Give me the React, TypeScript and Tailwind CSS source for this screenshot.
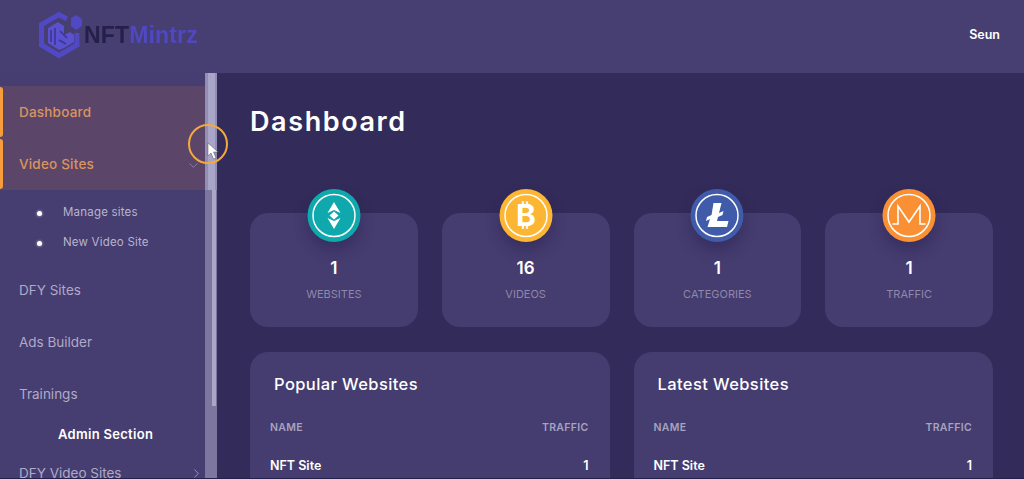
import { ChevronDown, ChevronRight } from 'lucide-react';

const font = "font-['Inter','Noto_Sans',sans-serif]";

function Logo() {
  return (
    <div className="flex items-center">
      <svg width="44" height="48" viewBox="0 0 44 48" className="mr-[2px] blur-[0.6px]">
        <path d="M29 8 L21 3.5 L3.5 13.5 V34 L21 44.5 L39 34 V22" fill="none" stroke="#5148c4" strokeWidth="5" />
        <path d="M33 7 L38 4 L44 8 V15 L38 19 L33 15 Z" fill="#5148c4" />
        <path d="M10 17 L20 11 L26 15 V37 L21 39 L10 32 Z" fill="#5a51d0" />
        <path d="M26 24 L32 21 L36 24 V31 L26 37 Z" fill="#5a51d0" />
        <path d="M13 19 V31 M17 17 V34 M22 20 L29 27 M21 29 L28 33" stroke="#3d3590" strokeWidth="1.6" fill="none" />
      </svg>
      <span className="text-[23px] font-bold leading-none tracking-[0.15px] blur-[0.4px] font-['Liberation_Sans',sans-serif]">
        <span className="text-[#25204a]">NFT</span>
        <span className="text-[#4f48c0]">Mintrz</span>
      </span>
    </div>
  );
}

function ActiveItem({ label, chevron }: { label: string; chevron?: boolean }) {
  return (
    <div className="relative flex h-[52px] items-center justify-between bg-[#5b4669] pl-[19px] pr-[4px]">
      <span className="absolute bottom-[1px] left-0 top-[1px] w-[3px] rounded-r-[3px] bg-[#f79d3c]" />
      <span className="text-[13.5px] font-medium tracking-[0.2px] text-[#d9945f]">{label}</span>
      {chevron && <ChevronDown size={15} strokeWidth={1.2} className="mt-[2px] text-[#948eb0]" />}
    </div>
  );
}

function SubItem({ label }: { label: string }) {
  return (
    <div className="flex h-[30px] items-center pl-[37px]">
      <span className="h-[5px] w-[5px] rounded-full bg-white shadow-[0_0_3px_rgba(255,255,255,0.7)]" />
      <span className="ml-[21px] text-[11.5px] tracking-[0.2px] text-[#b9b4cf]">{label}</span>
    </div>
  );
}

function NavItem({ label }: { label: string }) {
  return (
    <div className="flex h-[52px] items-center pl-[19px] text-[13.5px] text-[#b0aac8]">{label}</div>
  );
}

function Coin({ color, children }: { color: string; children: React.ReactNode }) {
  return (
    <div
      className="absolute left-1/2 top-[-24px] flex h-[53px] w-[53px] -translate-x-1/2 items-center justify-center rounded-full shadow-[0_8px_14px_rgba(40,32,80,0.45)]"
      style={{ backgroundColor: color }}
    >
      <svg width="53" height="53" viewBox="0 0 53 53">
        <circle cx="26.5" cy="26.5" r="21" fill="none" stroke="#fff" strokeWidth="1.5" />
        {children}
      </svg>
    </div>
  );
}

function StatCard({ value, label, color, icon }: { value: string; label: string; color: string; icon: React.ReactNode }) {
  return (
    <div className="relative flex h-[114px] flex-col items-center rounded-[18px] bg-[#453c6f] pt-[43px]">
      <Coin color={color}>{icon}</Coin>
      <div className="text-[17px] font-semibold leading-[24px] text-white">{value}</div>
      <div className="mt-[7px] text-[11px] leading-[14px] text-[#8e88ac]">{label}</div>
    </div>
  );
}

function TableCard({ title }: { title: string }) {
  return (
    <div className="h-[160px] rounded-[18px] bg-[#453c6f] pl-[20px] pr-[21px] pt-[22px]">
      <h2 className="pl-[4px] text-[16.5px] font-medium leading-[20px] tracking-[0.4px] text-white">{title}</h2>
      <div className="mt-[27px] flex justify-between text-[10.5px] font-semibold leading-[14px] tracking-[0.3px] text-[#a8a3c0]">
        <span>NAME</span>
        <span>TRAFFIC</span>
      </div>
      <div className="mt-[23px] flex justify-between text-[12.5px] font-semibold leading-[16px] text-white">
        <span>NFT Site</span>
        <span>1</span>
      </div>
    </div>
  );
}

export default function App() {
  return (
    <div className={`relative flex h-[479px] w-[1024px] flex-col overflow-hidden border-b border-[#25204a] bg-[#332b59] ${font}`}>
      <header className="flex h-[73px] shrink-0 items-center justify-between bg-[#473e71] pb-[3px] pl-[38px] pr-[24px]">
        <Logo />
        <span className="text-[12.5px] font-semibold text-white">Seun</span>
      </header>

      <div className="flex min-h-0 flex-1">
        <aside className="flex w-[217px] shrink-0 overflow-hidden bg-[#463d70]">
          <div className="w-[205px] pt-[13px]">
            <ActiveItem label="Dashboard" />
            <ActiveItem label="Video Sites" chevron />
            <div className="pb-[6px] pt-[8px]">
              <SubItem label="Manage sites" />
              <SubItem label="New Video Site" />
            </div>
            <NavItem label="DFY Sites" />
            <NavItem label="Ads Builder" />
            <NavItem label="Trainings" />
            <div className="mt-[6px] pl-[58px] text-[13px] font-semibold leading-[16px] tracking-[0.3px] text-white">Admin Section</div>
            <div className="mt-[23px] flex items-center justify-between pl-[19px] pr-[1px] text-[13.5px] leading-[16px] text-[#b0aac8]">
              <span>DFY Video Sites</span>
              <ChevronRight size={15} strokeWidth={1.2} />
            </div>
          </div>
          <div className="w-[12px] bg-[#7d769e]">
            <div className="h-[117px] bg-[#938eb3] pl-[3px]">
              <div className="h-full w-[7px] bg-[#a9a5c9]" />
            </div>
            <div className="ml-[7px] h-[216px] w-[4px] bg-[#aaa6c6]" />
          </div>
        </aside>

        <main className="min-w-0 flex-1 pl-[33px] pr-[31px]">
          <h1 className="mt-[32px] text-[27px] font-semibold leading-[34px] tracking-[1.6px] text-white">Dashboard</h1>
          <div className="mt-[74px] grid grid-cols-4 gap-x-[24px]">
            <StatCard
              value="1"
              label="WEBSITES"
              color="#0ea8ad"
              icon={
                <g fill="#fff">
                  <path d="M26.5 13 L33 24 L26.5 21 L20 24 Z" />
                  <path d="M26.5 40 L33 29 L26.5 32 L20 29 Z" />
                  <path d="M26.5 22.5 L31 26.5 L26.5 30.5 L22 26.5 Z" />
                </g>
              }
            />
            <StatCard
              value="16"
              label="VIDEOS"
              color="#fdb534"
              icon={
                <text x="26.5" y="37" textAnchor="middle" fontSize="30" fontWeight="700" fill="#fff">
                  ₿
                </text>
              }
            />
            <StatCard
              value="1"
              label="CATEGORIES"
              color="#3f5ba9"
              icon={<path d="M23 14 H31 L28.5 24 L33 22 L32 26 L27.5 28 L26.5 32 H38 L36.5 38 H17 L19.5 30 L15.5 32 L16.5 28 L21 26 Z" fill="#fff" />}
            />
            <StatCard
              value="1"
              label="TRAFFIC"
              color="#f99034"
              icon={
                <path d="M10 35 H15.5 V17 L26.5 33 L37.5 17 V35 H43" fill="none" stroke="#fff" strokeWidth="1.6" />
              }
            />
          </div>
          <div className="mt-[25px] grid grid-cols-2 gap-x-[24px]">
            <TableCard title="Popular Websites" />
            <TableCard title="Latest Websites" />
          </div>
        </main>
      </div>

      {/* cursor highlight from the screen recording */}
      <div className="absolute left-[188px] top-[124px] h-[40px] w-[40px] rounded-full border-2 border-[#f4a93c]" />
      <svg width="12" height="17" viewBox="0 0 12 17" className="absolute left-[207px] top-[143px]">
        <path d="M1 0 V13 L4 10 L6.5 16 L9 15 L6.5 9 H11 Z" fill="#fff" stroke="#555" strokeWidth="0.5" />
      </svg>
    </div>
  );
}
